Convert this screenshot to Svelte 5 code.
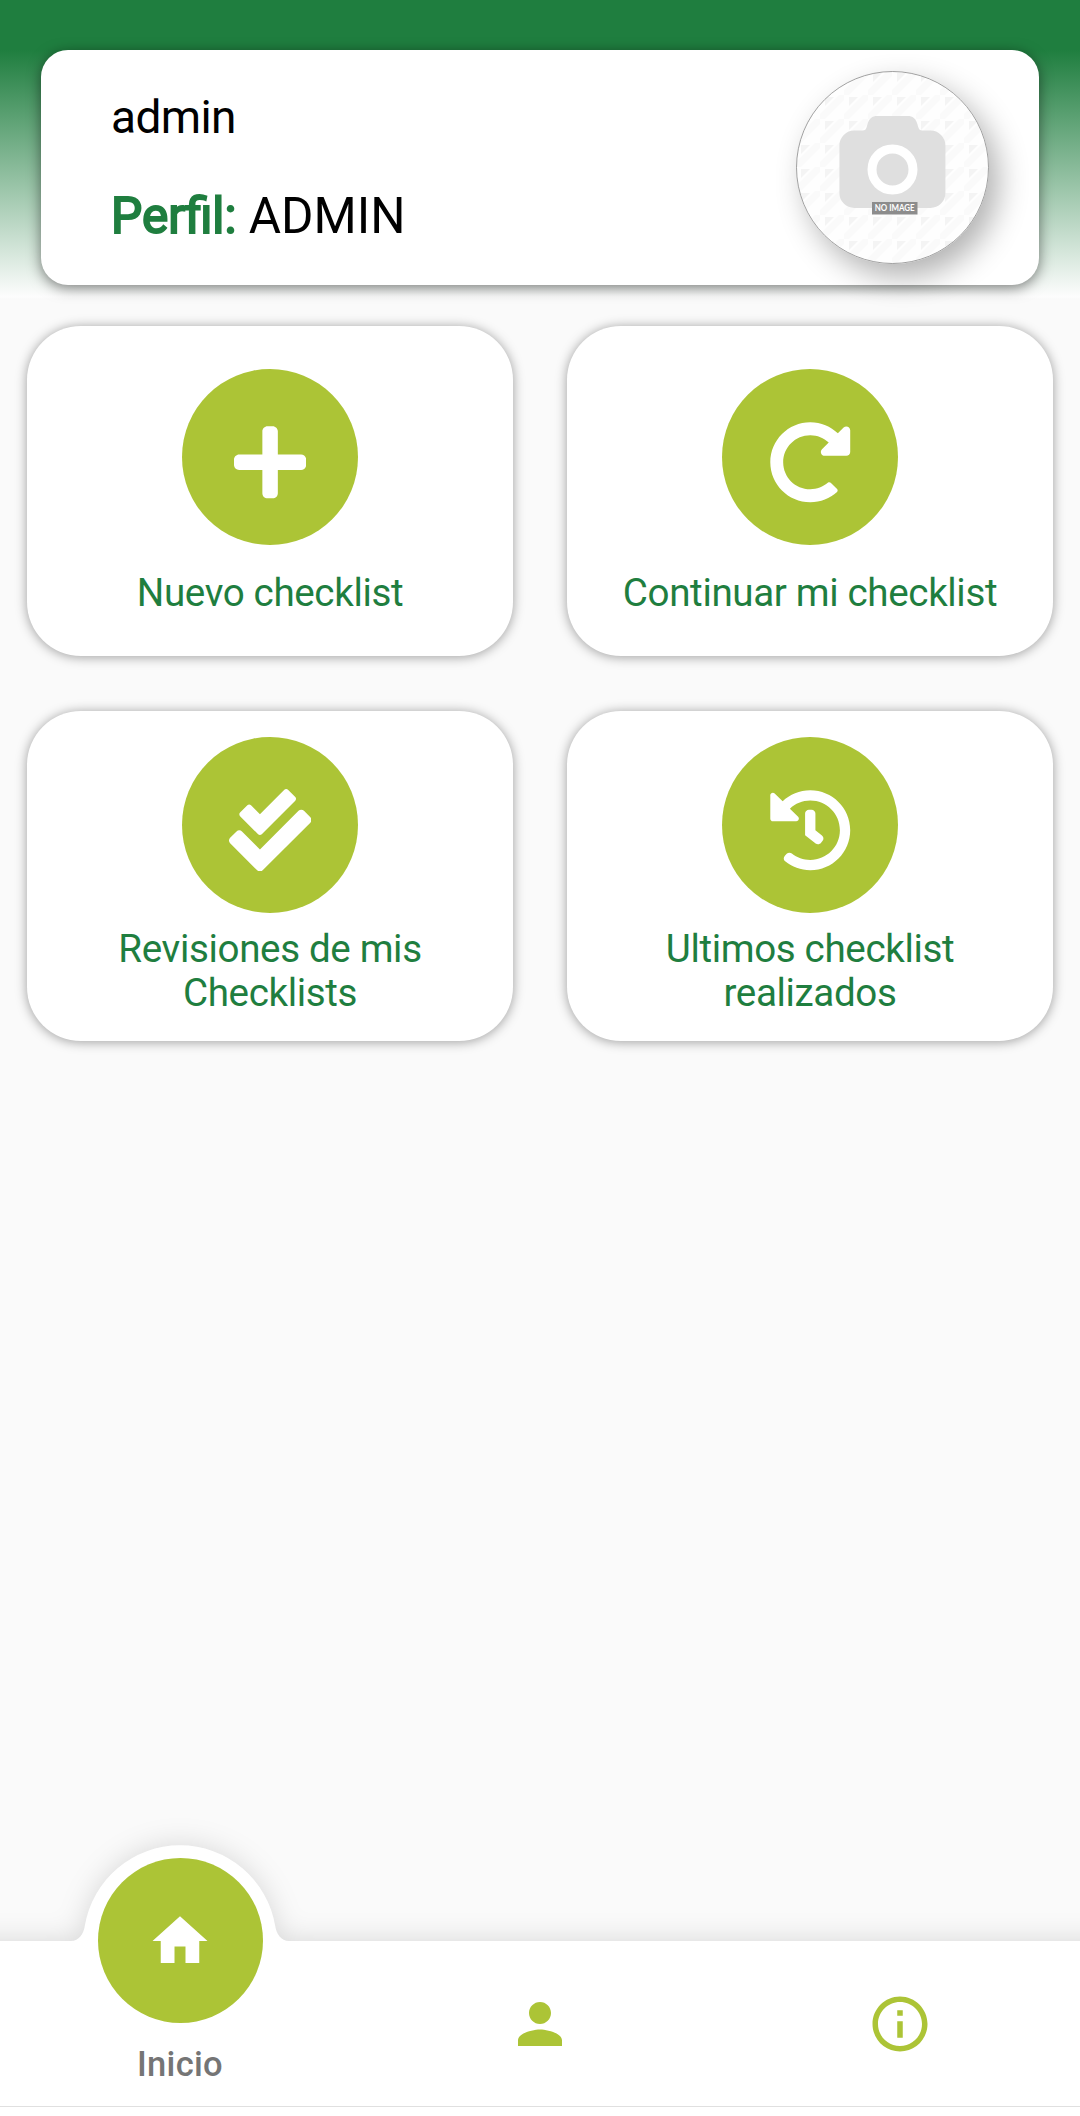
<script>
  const tiles = [
    {
      label: ['Nuevo checklist'],
      box: '0 0 448 512',
      path: 'M416 208H272V64c0-17.67-14.33-32-32-32h-32c-17.67 0-32 14.33-32 32v144H32c-17.67 0-32 14.33-32 32v32c0 17.67 14.33 32 32 32h144v144c0 17.67 14.33 32 32 32h32c17.67 0 32-14.33 32-32V304h144c17.67 0 32-14.33 32-32v-32c0-17.67-14.33-32-32-32z'
    },
    {
      label: ['Continuar mi checklist'],
      box: '0 0 512 512',
      path: 'M256.455 8c66.269.119 126.437 26.233 170.859 68.685l35.715-35.715C478.149 25.851 504 36.559 504 57.941V192c0 13.255-10.745 24-24 24H345.941c-21.382 0-32.09-25.851-16.971-40.971l41.75-41.75c-30.864-28.899-70.801-44.907-113.23-45.273-92.398-.798-170.283 73.977-169.484 169.442C88.764 348.009 162.184 424 256 424c41.127 0 79.997-14.678 110.629-41.556 4.743-4.161 11.906-3.908 16.368.553l39.662 39.662c4.872 4.872 4.631 12.815-.482 17.433C378.202 479.813 319.926 504 256 504 119.034 504 8.001 392.967 8 256.002 7.999 119.193 119.646 7.755 256.455 8z'
    },
    {
      label: ['Revisiones de mis', 'Checklists'],
      box: '0 0 512 512',
      path: 'M505 174.8l-39.6-39.6c-9.4-9.4-24.6-9.4-33.9 0L192 374.7 80.6 263.2c-9.4-9.4-24.6-9.4-33.9 0L7 302.9c-9.4 9.4-9.4 24.6 0 34L175 505c9.4 9.4 24.6 9.4 33.9 0l296-296.2c9.4-9.5 9.4-24.7.1-34zm-324.3 106c6.2 6.3 16.4 6.3 22.6 0l208-208.2c6.2-6.3 6.2-16.4 0-22.6L366.1 4.7c-6.2-6.3-16.4-6.3-22.6 0L192 156.2l-55.4-55.5c-6.2-6.3-16.4-6.3-22.6 0L68.7 146c-6.2 6.3-6.2 16.4 0 22.6l112 112.2z'
    },
    {
      label: ['Ultimos checklist', 'realizados'],
      box: '0 0 512 512',
      path: 'M504 255.531c.253 136.64-111.18 248.372-247.82 248.468-59.015.042-113.223-20.53-155.822-54.911-11.077-8.94-11.905-25.541-1.839-35.607l11.267-11.267c8.609-8.609 22.353-9.551 31.891-1.984C173.062 425.135 212.781 440 256 440c101.705 0 184-82.311 184-184 0-101.705-82.311-184-184-184-48.814 0-93.149 18.969-126.068 49.932l50.754 50.754c10.08 10.08 2.941 27.314-11.313 27.314H24c-8.837 0-16-7.163-16-16V38.627c0-14.254 17.234-21.393 27.314-11.314l49.372 49.372C129.209 34.136 189.552 8 256 8c136.81 0 247.747 110.78 248 247.531zm-180.912 78.784l9.823-12.63c8.138-10.463 6.253-25.542-4.21-33.679L288 256.349V152c0-13.255-10.745-24-24-24h-16c-13.255 0-24 10.745-24 24v135.651l65.409 50.874c10.463 8.137 25.541 6.253 33.679-4.21z'
    }
  ];
</script>

<div class="screen">
  <header>
    <section class="profile">
      <div class="info">
        <p class="user">admin</p>
        <p class="role"><span>Perfil:</span> ADMIN</p>
      </div>
      <div class="avatar">
        <svg viewBox="0 0 193 193">
          <defs>
            <pattern id="weave" width="24" height="24" patternUnits="userSpaceOnUse">
              <path d="M0 24L24 0" stroke="#fafafa" stroke-width="7" />
              <path d="M5 2h9L5 11z" fill="#f4f4f4" />
            </pattern>
          </defs>
          <circle cx="96.5" cy="96.5" r="96.2" fill="#fefefe" />
          <circle cx="96.5" cy="96.5" r="96" fill="url(#weave)" stroke="#777" stroke-width=".7" />
          <path
            d="M58.500 59.500h8c2.500 0 3.500-1 4.200-3.500l1-3.500c1.500-5 4.500-7.500 9.500-7.500h30.500c5 0 8 2.500 9.500 7.500l1 3.500c.7 2.500 1.700 3.500 4.200 3.500h8a15 15 0 0 1 15 15v47.500a15 15 0 0 1-15 15h-76a15 15 0 0 1-15-15v-47.500a15 15 0 0 1 15-15z"
            fill="#dfdfdf"
          />
          <circle cx="96.500" cy="98.500" r="20.500" fill="none" stroke="#fff" stroke-width="9" />
          <rect x="76" y="131" width="45.500" height="12.500" fill="#8c8c8c" />
          <text x="98.700" y="140.200" textLength="40" lengthAdjust="spacingAndGlyphs" text-anchor="middle">NO IMAGE</text>
        </svg>
      </div>
    </section>
  </header>

  <main>
    {#each tiles as tile}
      <button class="tile" class:double={tile.label.length > 1}>
        <span class="disc">
          <svg viewBox={tile.box} fill="#fff"><path d={tile.path} /></svg>
        </span>
        <span class="label">
          {#each tile.label as line}<span>{line}</span>{/each}
        </span>
      </button>
    {/each}
  </main>

  <nav>
    <svg class="shape" viewBox="0 0 1080 275">
      <path d="M-60 100H71C79 100 83.500 93 84.800 85A96.500 96.500 0 0 1 275.200 85C276.500 93 281 100 289 100H1140V400H-60z" fill="#fff" />
    </svg>
    <a class="item active" href="#inicio">
      <span class="home">
        <svg viewBox="0 0 24 24" fill="#fff"><path d="M10 20v-6h4v6h5v-8h3L12 3 2 12h3v8z" /></svg>
      </span>
      <span class="caption">Inicio</span>
    </a>
    <a class="item" href="#perfil" aria-label="Perfil">
      <svg viewBox="0 0 24 24" fill="#acc436"><path d="M12 12c2.210 0 4-1.790 4-4s-1.790-4-4-4-4 1.790-4 4 1.790 4 4 4zm0 2c-2.670 0-8 1.340-8 4v2h16v-2c0-2.660-5.330-4-8-4z" /></svg>
    </a>
    <a class="item" href="#info" aria-label="Info">
      <svg viewBox="0 0 24 24" fill="#acc436"><path d="M11 7h2v2h-2zm0 4h2v6h-2zm1-9C6.480 2 2 6.480 2 12s4.480 10 10 10 10-4.480 10-10S17.520 2 12 2zm0 18c-4.410 0-8-3.590-8-8s3.590-8 8-8 8 3.590 8 8-3.590 8-8 8z" /></svg>
    </a>
  </nav>
</div>

<style>
  :global(body) {
    margin: 0;
    background: #fafafa;
  }

  .screen {
    width: 1080px;
    height: 2116px;
    display: flex;
    flex-direction: column;
    overflow: hidden;
    background: #fafafa;
    font-family: Roboto, sans-serif;
  }

  header {
    box-sizing: border-box;
    height: 299px;
    padding: 50px 41px 14px;
    background: linear-gradient(#1f7e3f 0, #1f7e3f 50px, #fdfdfd 297px, #fafafa 299px);
  }

  .profile {
    box-sizing: border-box;
    height: 235px;
    padding: 0 50px 0 70px;
    display: flex;
    align-items: center;
    justify-content: space-between;
    border-radius: 27px;
    background: #fff;
    box-shadow: 0 3px 14px rgba(0, 0, 0, 0.5);
  }

  .info {
    display: flex;
    flex-direction: column;
    gap: 43px;
  }

  p {
    margin: 0;
    color: #000;
    white-space: pre;
  }

  .user {
    font-size: 46px;
    line-height: 53px;
    letter-spacing: -0.6px;
  }

  .role {
    font-size: 49.500px;
    line-height: 58px;
  }

  .role span {
    color: #1f7e3f;
    -webkit-text-stroke: 2px #1f7e3f;
  }

  .avatar {
    width: 193px;
    height: 193px;
    border-radius: 50%;
    box-shadow: 10px 13px 30px rgba(0, 0, 0, 0.3);
  }

  .avatar svg {
    display: block;
    width: 193px;
    height: 193px;
  }

  .avatar text {
    font: 700 8.500px Lato, sans-serif;
    fill: #fff;
  }

  main {
    flex: 1;
    display: grid;
    grid-template-columns: 1fr 1fr;
    grid-auto-rows: 330px;
    align-content: start;
    gap: 55px 54px;
    padding: 27px 27px 0;
  }

  .tile {
    display: flex;
    flex-direction: column;
    align-items: center;
    gap: 26px;
    padding: 43px 0 0;
    border: 0;
    border-radius: 54px;
    background: #fff;
    color: #1f7e3f;
    font: 400 38.600px/44px Roboto, sans-serif;
    letter-spacing: -0.36px;
    box-shadow: 0 1px 12px rgba(0, 0, 0, 0.38);
  }

  .tile.double {
    gap: 14px;
    padding-top: 26px;
  }

  .disc {
    box-sizing: border-box;
    width: 176px;
    height: 176px;
    padding-top: 10px;
    display: flex;
    align-items: center;
    justify-content: center;
    border-radius: 50%;
    background: #acc436;
  }

  .disc svg {
    height: 82.500px;
  }

  .label {
    display: flex;
    flex-direction: column;
    align-items: center;
  }

  nav {
    position: relative;
    box-sizing: border-box;
    height: 175px;
    padding-bottom: 9px;
    display: grid;
    grid-template-columns: repeat(3, 1fr);
  }

  /* White bar with the raised bump behind the active tab */
  .shape {
    position: absolute;
    left: 0;
    bottom: 0;
    width: 1080px;
    height: 275px;
    overflow: visible;
    filter: drop-shadow(0 0 14px rgba(0, 0, 0, 0.14));
  }

  .item {
    position: relative;
    display: flex;
    flex-direction: column;
    align-items: center;
    justify-content: center;
    border-bottom: 1px solid #e0e0e0;
    text-decoration: none;
  }

  .item svg {
    width: 66px;
    height: 66px;
  }

  .item.active {
    justify-content: flex-start;
  }

  .home {
    width: 165px;
    height: 165px;
    margin-top: -83px;
    display: flex;
    align-items: center;
    justify-content: center;
    border-radius: 50%;
    background: #acc436;
  }

  .caption {
    margin-top: 21px;
    color: #757575;
    font-size: 34.500px;
    font-weight: 500;
    line-height: 40px;
    letter-spacing: 0.3px;
  }
</style>
